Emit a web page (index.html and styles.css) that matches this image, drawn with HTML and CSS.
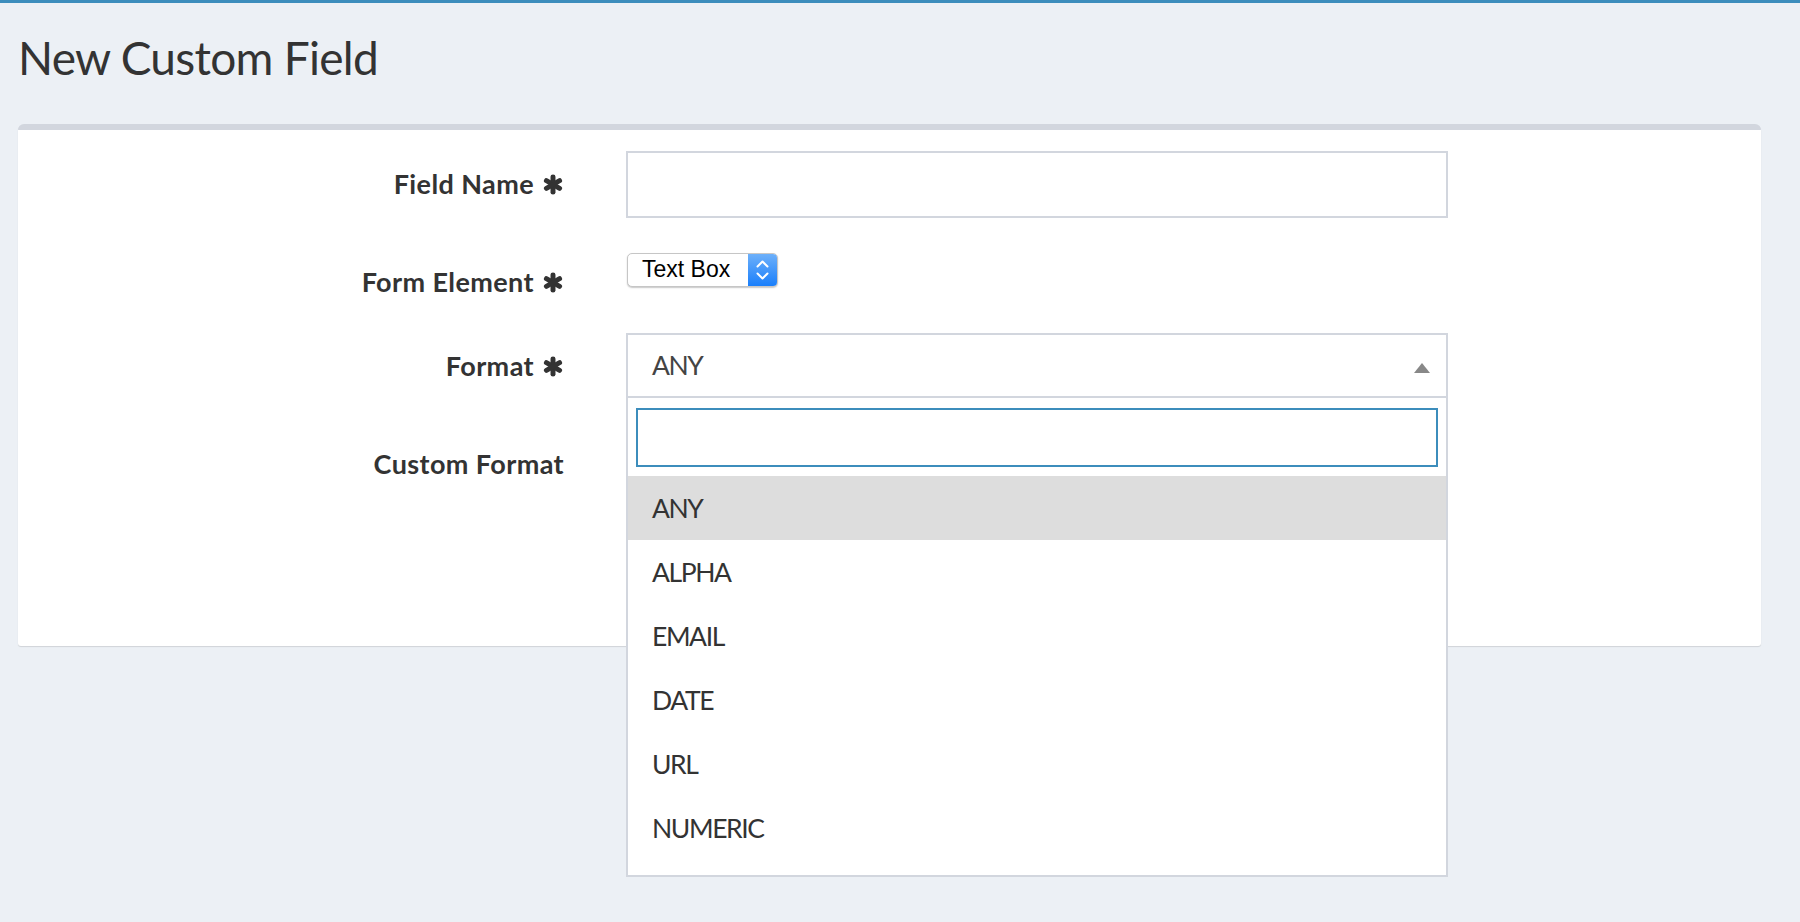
FILE: index.html
```html
<!DOCTYPE html>
<html lang="en">
<head>
<meta charset="utf-8">
<title>New Custom Field</title>
<link rel="stylesheet" href="styles.css">
</head>
<body>
<div class="topbar"></div>
<div class="content">
  <h1 class="page-title">New Custom Field</h1>
  <div class="box">
    <div class="form-grid">
      <label class="lbl">Field Name<svg class="req" viewBox="0 0 22 22" width="22" height="21"><g stroke="#333" stroke-width="5.2" stroke-linecap="round"><line x1="11" y1="3" x2="11" y2="19"/><line x1="4.1" y1="7" x2="17.9" y2="15"/><line x1="4.1" y1="15" x2="17.9" y2="7"/></g></svg></label>
      <div class="ctl"><div class="text-input"></div></div>

      <label class="lbl">Form Element<svg class="req" viewBox="0 0 22 22" width="22" height="21"><g stroke="#333" stroke-width="5.2" stroke-linecap="round"><line x1="11" y1="3" x2="11" y2="19"/><line x1="4.1" y1="7" x2="17.9" y2="15"/><line x1="4.1" y1="15" x2="17.9" y2="7"/></g></svg></label>
      <div class="ctl">
        <div class="native-select">
          <span class="ns-text">Text Box</span>
          <span class="ns-stepper"><svg viewBox="0 0 29 34" width="29" height="34"><g fill="none" stroke="#fff" stroke-width="2" stroke-linecap="round" stroke-linejoin="round"><polyline points="9.5,13.5 14.5,8.5 19.5,13.5"/><polyline points="9.5,20.5 14.5,25.5 19.5,20.5"/></g></svg></span>
        </div>
      </div>

      <label class="lbl">Format<svg class="req" viewBox="0 0 22 22" width="22" height="21"><g stroke="#333" stroke-width="5.2" stroke-linecap="round"><line x1="11" y1="3" x2="11" y2="19"/><line x1="4.1" y1="7" x2="17.9" y2="15"/><line x1="4.1" y1="15" x2="17.9" y2="7"/></g></svg></label>
      <div class="ctl">
        <div class="s2">
          <div class="s2-selection"><span class="s2-value">ANY</span><span class="s2-arrow"></span></div>
          <div class="s2-dropdown">
            <div class="s2-search"><div class="s2-search-field"></div></div>
            <ul class="s2-options">
              <li class="s2-opt is-hl">ANY</li>
              <li class="s2-opt">ALPHA</li>
              <li class="s2-opt">EMAIL</li>
              <li class="s2-opt">DATE</li>
              <li class="s2-opt">URL</li>
              <li class="s2-opt">NUMERIC</li>
            </ul>
          </div>
        </div>
      </div>

      <label class="lbl">Custom Format</label>
      <div class="ctl"><div class="text-input"></div></div>
    </div>
  </div>
</div>
</body>
</html>
```

FILE: styles.css
```css
* { box-sizing: border-box; }

html, body {
  margin: 0;
  padding: 0;
  background: #ecf0f5;
  font-family: Lato, "Open Sans", sans-serif;
  color: #333;
}

html { height: 100%; }

body {
  min-height: 100%;
  overflow: visible;
}

.topbar {
  height: 3px;
  background: #3c8dbc;
}

.content {
  padding: 27px 39px 0 18px;
}

.page-title {
  margin: 0 0 38px 0;
  font-size: 46px;
  font-weight: 400;
  line-height: 56px;
  letter-spacing: -0.7px;
  color: #333;
}

.box {
  background: #fff;
  border-top: 6px solid #d2d6de;
  border-radius: 6px 6px 3px 3px;
  box-shadow: 0 1px 1px rgba(0, 0, 0, 0.12);
  min-height: 522px;
  padding: 21px 0 0 0;
  overflow: visible;
}

.form-grid {
  display: grid;
  grid-template-columns: 546px 822px;
  grid-template-rows: 67px 53px 67px 67px;
  column-gap: 62px;
  row-gap: 31px;
}

.lbl {
  display: block;
  text-align: right;
  white-space: nowrap;
  padding-top: 14px;
  font-size: 27px;
  line-height: 38px;
  font-weight: 700;
  letter-spacing: 0.4px;
  color: #333;
}

.req {
  margin-left: 8px;
  vertical-align: -1px;
}

.ctl {
  position: relative;
}

.text-input {
  height: 67px;
  border: 2px solid #d2d6de;
  background: #fff;
}

.native-select {
  margin-top: 4px;
  margin-left: 1px;
  width: 151px;
  height: 34px;
  display: flex;
  align-items: stretch;
  background: #fff;
  border: 1px solid #c6c6c6;
  border-radius: 5px;
  box-shadow: 0 1px 1.5px rgba(0, 0, 0, 0.22);
  overflow: hidden;
}

.ns-text {
  flex: 1;
  padding-left: 14px;
  font-family: "Liberation Sans", Arial, sans-serif;
  font-size: 23px;
  line-height: 31px;
  color: #000;
}

.ns-stepper {
  width: 29px;
  display: flex;
  align-items: center;
  justify-content: center;
  background: linear-gradient(#6db0fa, #1a7ffb);
}

.ns-stepper svg { display: block; margin-top: -1px; }

.s2 {
  position: relative;
}

.s2-selection {
  height: 65px;
  border: 2px solid #d2d6de;
  background: #fff;
  display: flex;
  align-items: center;
  justify-content: space-between;
  padding: 0 16px 0 24px;
}

.s2-value {
  font-size: 26.5px;
  line-height: 61px;
  color: #444;
  letter-spacing: -1.4px;
}

.s2-arrow {
  width: 0;
  height: 0;
  margin-top: 4px;
  border-left: 8px solid transparent;
  border-right: 8px solid transparent;
  border-bottom: 10px solid #888;
}

.s2-dropdown {
  position: absolute;
  top: 100%;
  left: 0;
  right: 0;
  z-index: 10;
  background: #fff;
  border: 2px solid #d2d6de;
  border-top: 0;
}

.s2-search {
  padding: 10px 8px 9px 8px;
}

.s2-search-field {
  height: 59px;
  border: 2px solid #3c8dbc;
  background: #fff;
}

.s2-options {
  list-style: none;
  margin: 0;
  padding: 0 0 15px 0;
}

.s2-opt {
  height: 64px;
  padding-left: 24px;
  font-size: 26.5px;
  line-height: 64px;
  letter-spacing: -1.4px;
  color: #333;
}

.s2-opt.is-hl {
  background: #ddd;
}
```
